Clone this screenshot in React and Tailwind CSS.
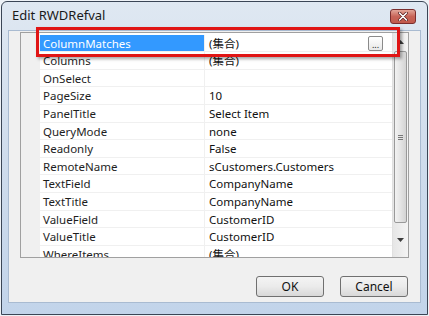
import React from "react";

const rows = [
  ["ColumnMatches", "(集合)"],
  ["Columns", "(集合)"],
  ["OnSelect", ""],
  ["PageSize", "10"],
  ["PanelTitle", "Select Item"],
  ["QueryMode", "none"],
  ["Readonly", "False"],
  ["RemoteName", "sCustomers.Customers"],
  ["TextField", "CompanyName"],
  ["TextTitle", "CompanyName"],
  ["ValueField", "CustomerID"],
  ["ValueTitle", "CustomerID"],
  ["WhereItems", "(集合)"],
];

const font = { fontFamily: '"Noto Sans", "Noto Sans CJK TC", sans-serif' };

export default function App() {
  return (
    <div className="w-[429px] h-[316px] bg-[#eef2f7] p-[1px] overflow-hidden relative" style={font}>
      <div className="h-full border border-[#3b4656] rounded-t-[6px] bg-gradient-to-b from-[#dfe8f2] via-[#cfdcec] to-[#c2d4ea] flex flex-col">
        {/* title bar */}
        <div className="h-[28px] flex items-start shrink-0 relative">
          <div className="pl-[10px] pt-[5px] text-[13px] leading-[17px] text-[#1a1a1a]">Edit RWDRefval</div>
          <div className="absolute left-[388px] top-[7px] w-[26px] h-[15px] rounded-[3px] border border-[#7a2e2e] bg-gradient-to-b from-[#e2a69a] via-[#c76458] to-[#c25a4c] flex items-center justify-center">
            <svg width="10" height="9" viewBox="0 0 10 9">
              <path d="M1.5 1 L8.5 8 M8.5 1 L1.5 8" stroke="#5a1f1f" strokeWidth="3" strokeLinecap="round" />
              <path d="M1.5 1 L8.5 8 M8.5 1 L1.5 8" stroke="#ffffff" strokeWidth="1.6" strokeLinecap="round" />
            </svg>
          </div>
        </div>
        {/* client area */}
        <div className="flex-1 mx-[6px] mb-[11px] bg-[#f0f0f0] border border-[#a9bbd1] flex flex-col">
          {/* property grid */}
          <div className="ml-[11px] mt-[1px] w-[389px] h-[226px] border border-[#a0a0a0] bg-white flex overflow-hidden">
            <div className="w-[19px] bg-[#f0f0f0] shrink-0" />
            <div className="flex-1 pt-[1.7px] overflow-hidden">
              {rows.map(([name, value], i) => (
                <div key={name} className="h-[17.6px] flex border-b border-[#f0f0f0] text-[11.5px] leading-[17px]">
                  <div
                    className={
                      "w-[165px] shrink-0 pl-[3px] whitespace-nowrap border-r border-[#f0f0f0] " +
                      (i === 0 ? "bg-[#3399ff] text-white" : "text-[#1e1e1e]")
                    }
                  >
                    {name}
                  </div>
                  <div className="flex-1 pl-[4px] whitespace-nowrap text-[#111] relative">
                    {value}
                    {i === 0 && (
                      <div className="absolute left-[163px] top-[1px] w-[15px] h-[15px] border border-[#8a8a8a] rounded-[2px] bg-gradient-to-b from-[#ffffff] to-[#e8e8e8] flex items-end justify-center text-[9px] leading-[11px] text-[#222]">
                        ...
                      </div>
                    )}
                  </div>
                </div>
              ))}
            </div>
            {/* scrollbar */}
            <div className="w-[16px] shrink-0 bg-gradient-to-r from-[#e6e6e6] to-[#f4f4f4] border-l border-[#e0e0e0] flex flex-col items-center">
              <div className="h-[18px] flex items-center justify-center">
                <svg width="7" height="4" viewBox="0 0 7 4"><path d="M0 4 L3.5 0 L7 4 Z" fill="#3c3c3c" /></svg>
              </div>
              <div className="w-[13px] h-[172px] rounded-[2px] border border-[#999] bg-gradient-to-r from-[#f2f2f2] via-[#e4e4e4] to-[#d4d4d4] flex items-center justify-center">
                <div className="flex flex-col gap-[1px]">
                  <div className="w-[5px] h-[1px] bg-[#777]" />
                  <div className="w-[5px] h-[1px] bg-[#777]" />
                  <div className="w-[5px] h-[1px] bg-[#777]" />
                </div>
              </div>
              <div className="flex-1 flex items-center justify-center">
                <svg width="7" height="4" viewBox="0 0 7 4"><path d="M0 0 L3.5 4 L7 0 Z" fill="#3c3c3c" /></svg>
              </div>
            </div>
          </div>
          {/* buttons */}
          <div className="flex justify-end gap-[16px] mt-[18px] mr-[12px]">
            <button className="w-[68px] h-[21px] rounded-[3px] border border-[#707070] bg-gradient-to-b from-[#f4f4f4] via-[#ebebeb] to-[#d8d8d8] text-[12px] leading-[18px] text-[#111]">
              OK
            </button>
            <button className="w-[68px] h-[21px] rounded-[3px] border border-[#707070] bg-gradient-to-b from-[#f4f4f4] via-[#ebebeb] to-[#d8d8d8] text-[12px] leading-[18px] text-[#111]">
              Cancel
            </button>
          </div>
        </div>
      </div>
      {/* red annotation box */}
      <div className="absolute left-[36px] top-[27px] w-[364px] h-[30px] border-[3px] border-[#e01515] shadow-[2px_2px_3px_rgba(0,0,0,0.35)]" />
    </div>
  );
}
